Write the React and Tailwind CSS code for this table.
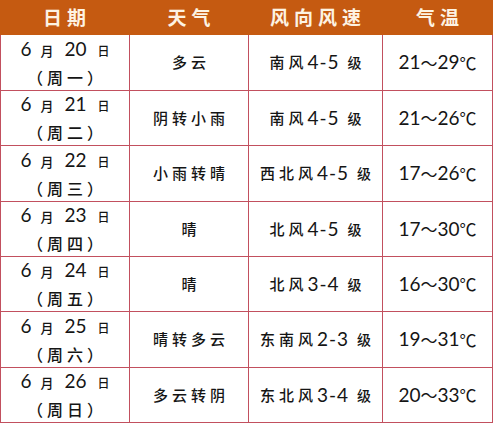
import React from "react";

const rows = [
  { m: "6", d: "20", w: "一", weather: "多云", wind: ["南风", "4-5"], t: ["21", "29"], h: "h-[56px]" },
  { m: "6", d: "21", w: "二", weather: "阴转小雨", wind: ["南风", "4-5"], t: ["21", "26"], h: "h-[55px]" },
  { m: "6", d: "22", w: "三", weather: "小雨转晴", wind: ["西北风", "4-5"], t: ["17", "26"], h: "h-[56px]" },
  { m: "6", d: "23", w: "四", weather: "晴", wind: ["北风", "4-5"], t: ["17", "30"], h: "h-[55px]" },
  { m: "6", d: "24", w: "五", weather: "晴", wind: ["北风", "3-4"], t: ["16", "30"], h: "h-[55px]" },
  { m: "6", d: "25", w: "六", weather: "晴转多云", wind: ["东南风", "2-3"], t: ["19", "31"], h: "h-[56px]" },
  { m: "6", d: "26", w: "日", weather: "多云转阴", wind: ["东北风", "3-4"], t: ["20", "33"], h: "h-[55px]" },
];

const CJK = "font-['Noto_Sans_CJK_SC',sans-serif]";
const NUM = "font-['Lato','Noto_Sans_CJK_SC',sans-serif]";

export default function App() {
  return (
    <div className="w-[494px] h-[425px] bg-white">
      <div className="w-[493px]">
        <div className="grid grid-cols-[130px_119px_134px_110px] h-[35px] bg-[#c55a11] text-[#fdf3e3] font-bold text-[19px] tracking-[5px] font-['Noto_Sans_CJK_SC',sans-serif]">
          <div className="flex items-center justify-center pl-[4px]">日期</div>
          <div className="flex items-center justify-center pl-[4px]">天气</div>
          <div className="flex items-center justify-center pl-[4px]">风向风速</div>
          <div className="flex items-center justify-center pl-[4px]">气温</div>
        </div>
        {rows.map((r, i) => (
          <div key={i} className={`grid grid-cols-[130px_119px_134px_110px] ${r.h} text-[#151515]`}>
            <div className="border-l border-b border-r border-[#c2505e] flex flex-col items-center justify-center leading-[26px]">
              <div className="flex items-baseline">
                <span className={`text-[19px] ${NUM}`}>{r.m}</span>
                <span className={`text-[13px] font-medium ml-[9px] ${CJK}`}>月</span>
                <span className={`text-[19px] ml-[11px] ${NUM}`}>{r.d}</span>
                <span className={`text-[12px] font-medium ml-[11px] ${CJK}`}>日</span>
              </div>
              <div className={`text-[16px] font-medium tracking-[4px] ml-[4px] ${CJK}`}>（周{r.w}）</div>
            </div>
            <div className={`border-b border-r border-[#c2505e] flex items-center justify-center text-[15px] font-medium tracking-[4px] pl-[4px] ${CJK}`}>
              {r.weather}
            </div>
            <div className="border-b border-r border-[#c2505e] flex items-center justify-center">
              <span className={`text-[15px] font-medium tracking-[4px] ${CJK}`}>{r.wind[0]}</span>
              <span className={`text-[19px] tracking-[1px] ${NUM}`}>{r.wind[1]}</span>
              <span className={`text-[14px] font-medium ml-[8px] ${CJK}`}>级</span>
            </div>
            <div className={`border-b border-r border-[#c2505e] flex items-center justify-center text-[19px] ${NUM}`}>
              <span>{r.t[0]}</span>
              <span className={`text-[17px] ${CJK}`}>～</span>
              <span>{r.t[1]}</span>
              <span className={`text-[17px] ${CJK}`}>℃</span>
            </div>
          </div>
        ))}
      </div>
    </div>
  );
}
